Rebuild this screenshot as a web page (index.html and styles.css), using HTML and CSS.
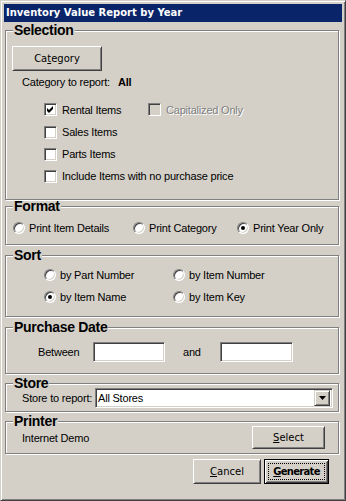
FILE: index.html
```html
<!DOCTYPE html>
<html lang="en">
<head>
  <meta charset="UTF-8" />
  <meta name="viewport" content="width=device-width, initial-scale=1.0"/>
  <title>Inventory Value Report by Year</title>
  <link rel="stylesheet" href="styles.css">
</head>
<body>

  <div class="window">
    <div class="titlebar">Inventory Value Report by Year</div>
    <div class="client">

      <fieldset class="group selection">
        <legend>Selection</legend>
        <button class="btn category-btn">Ca<u>t</u>egory</button>
        <div class="report-line"><span class="report-label">Category to report:</span><b>All</b></div>
        <div class="check-row tall">
          <label class="check-item first-col">
            <span class="check"><svg width="11" height="11" viewBox="0 0 11 11"><polygon points="2,4 4,6 8,2 8,5 4,9 2,7" fill="#000"/></svg></span>Rental Items
          </label>
          <label class="check-item disabled"><span class="check"></span>Capitalized Only</label>
        </div>
        <div class="check-row">
          <label class="check-item"><span class="check"></span>Sales Items</label>
        </div>
        <div class="check-row">
          <label class="check-item"><span class="check"></span>Parts Items</label>
        </div>
        <div class="check-row">
          <label class="check-item"><span class="check"></span>Include Items with no purchase price</label>
        </div>
      </fieldset>

      <fieldset class="group format">
        <legend>Format</legend>
        <div class="format-row">
          <label class="radio-item"><span class="radio"></span>Print Item Details</label>
          <label class="radio-item"><span class="radio"></span>Print Category</label>
          <label class="radio-item"><span class="radio"><span class="dot"></span></span>Print Year Only</label>
        </div>
      </fieldset>

      <fieldset class="group sort">
        <legend>Sort</legend>
        <div class="sort-grid">
          <label class="radio-item"><span class="radio"></span>by Part Number</label>
          <label class="radio-item"><span class="radio"></span>by Item Number</label>
          <label class="radio-item"><span class="radio"><span class="dot"></span></span>by Item Name</label>
          <label class="radio-item"><span class="radio"></span>by Item Key</label>
        </div>
      </fieldset>

      <fieldset class="group purchase">
        <legend>Purchase Date</legend>
        <div class="date-row">
          <span class="date-label">Between</span>
          <input class="field from" type="text">
          <span class="date-and">and</span>
          <input class="field to" type="text">
        </div>
      </fieldset>

      <fieldset class="group store">
        <legend>Store</legend>
        <div class="store-row">
          <span class="store-label">Store to report:</span>
          <div class="combo">
            <span class="combo-text">All Stores</span>
            <span class="combo-btn"><svg width="7" height="4" viewBox="0 0 7 4"><polygon points="0,0 7,0 3.5,4" fill="#000"/></svg></span>
          </div>
        </div>
      </fieldset>

      <fieldset class="group printer">
        <legend>Printer</legend>
        <div class="printer-row">
          <span>Internet Demo</span>
          <button class="btn select-btn"><u>S</u>elect</button>
        </div>
      </fieldset>

      <div class="actions">
        <button class="btn cancel-btn"><u>C</u>ancel</button>
        <button class="btn default-btn"><span class="focus"><u>G</u>enerate</span></button>
      </div>

    </div>
  </div>

</body>
</html>
```

FILE: styles.css
```css
* {
  box-sizing: border-box;
}

body {
  margin: 0;
  background: #d4d0c8;
  font-family: "Liberation Sans", Arial, sans-serif;
  font-size: 11px;
  letter-spacing: -0.2px;
  color: #000;
}

.window {
  width: 346px;
  height: 501px;
  padding: 3px;
  border: 1px solid;
  border-color: #d4d0c8 #404040 #404040 #d4d0c8;
  box-shadow: inset 1px 1px #fff, inset -1px -1px #808080;
  background: #d4d0c8;
  display: flex;
  flex-direction: column;
}

.titlebar {
  height: 18px;
  padding-left: 2px;
  background: #0a246a;
  color: #fff;
  font: bold 10px "DejaVu Sans", sans-serif;
  line-height: 18px;
  letter-spacing: 0;
}

.client {
  flex: 1;
  display: flex;
  flex-direction: column;
}

/* group boxes */
.group {
  margin: 0 3px 0 1px;
  padding: 0;
  min-width: 0;
  border: 1px solid #808080;
  box-shadow: inset 1px 1px #fff, 1px 1px #fff;
}

.group legend {
  margin-left: 7px;
  padding: 0 1px;
  font: bold 14px "Liberation Sans", Arial, sans-serif;
  line-height: 10px;
  letter-spacing: -0.3px;
  background: #d4d0c8;
}

.selection { margin-top: 3px; height: 175px; }
.format    { margin-top: 1px; height: 44px; }
.sort      { margin-top: 5px; height: 67px; }
.purchase  { margin-top: 5px; height: 52px; }
.store     { margin-top: 4px; height: 34px; }
.printer   { margin-top: 4px; height: 38px; }

/* classic buttons */
.btn {
  padding: 0;
  border: 1px solid;
  border-color: #fff #404040 #404040 #fff;
  box-shadow: inset 1px 1px #d4d0c8, inset -1px -1px #808080;
  background: #d4d0c8;
  color: #000;
  font: 10px "DejaVu Sans", sans-serif;
  cursor: pointer;
}

.category-btn {
  display: block;
  width: 90px;
  height: 25px;
  margin: 11px 0 0 6px;
}

.report-line {
  height: 13px;
  line-height: 13px;
  margin-top: 5px;
  padding-left: 16px;
}

.report-label {
  display: inline-block;
  width: 96px;
}

/* checkboxes */
.check-row {
  height: 22px;
  padding-left: 38px;
  display: flex;
  align-items: center;
}

.check-row.tall {
  height: 23px;
  margin-top: 9px;
}

.check-item {
  display: flex;
  align-items: center;
  gap: 5px;
}

.check-item.first-col {
  width: 104px;
}

.check {
  width: 13px;
  height: 13px;
  border: 1px solid;
  border-color: #808080 #fff #fff #808080;
  box-shadow: inset 1px 1px #404040, inset -1px -1px #d4d0c8;
  background: #fff;
  display: flex;
}

.check svg {
  display: block;
}

.disabled {
  color: #808080;
  text-shadow: 1px 1px 0 #fff;
}

.disabled .check {
  background: #d4d0c8;
}

/* radios */
.radio-item {
  display: flex;
  align-items: center;
  gap: 4px;
}

.radio {
  width: 12px;
  height: 12px;
  flex: none;
  border-radius: 50%;
  border: 1px solid;
  border-color: #808080 #fff #fff #808080;
  box-shadow: inset 1px 1px #404040, inset -1px -1px #d4d0c8;
  background: #fff;
  display: flex;
  align-items: center;
  justify-content: center;
}

.dot {
  width: 4px;
  height: 4px;
  border-radius: 50%;
  background: #000;
}

.format-row {
  margin-top: 6px;
  height: 22px;
  padding-left: 7px;
  display: grid;
  grid-template-columns: 120px 104px auto;
}

.sort-grid {
  margin-top: 4px;
  padding-left: 38px;
  display: grid;
  grid-template-columns: 129px auto;
  grid-auto-rows: 22px;
}

/* purchase date */
.date-row {
  margin-top: 10px;
  padding-left: 32px;
  display: flex;
  align-items: center;
}

.date-label {
  width: 55px;
}

.date-and {
  width: 37px;
  margin-left: 18px;
}

.field {
  height: 20px;
  margin: 0;
  padding: 0 2px;
  border: 1px solid;
  border-color: #808080 #fff #fff #808080;
  box-shadow: inset 1px 1px #404040, inset -1px -1px #d4d0c8;
  background: #fff;
  font: 11px "Liberation Sans", Arial, sans-serif;
  outline: none;
}

.field.from { width: 72px; }
.field.to   { width: 73px; }

/* store */
.store-row {
  padding-left: 16px;
  display: flex;
  align-items: center;
}

.store-label {
  width: 73px;
}

.combo {
  width: 238px;
  height: 20px;
  padding: 2px;
  border: 1px solid;
  border-color: #808080 #fff #fff #808080;
  box-shadow: inset 1px 1px #404040, inset -1px -1px #d4d0c8;
  background: #fff;
  display: flex;
  align-items: center;
}

.combo-text {
  flex: 1;
  padding-left: 0;
}

.combo-btn {
  width: 16px;
  height: 16px;
  border: 1px solid;
  border-color: #d4d0c8 #404040 #404040 #d4d0c8;
  box-shadow: inset 1px 1px #fff, inset -1px -1px #808080;
  background: #d4d0c8;
  display: flex;
  align-items: center;
  justify-content: center;
}

.combo-btn svg {
  display: block;
}

/* printer */
.printer-row {
  height: 23px;
  padding-left: 16px;
  display: flex;
  align-items: center;
}

.select-btn {
  width: 73px;
  height: 23px;
  margin: 0 13px 0 auto;
}

/* bottom buttons */
.actions {
  margin-top: 5px;
  padding-right: 13px;
  display: flex;
  justify-content: flex-end;
  gap: 3px;
}

.cancel-btn {
  width: 68px;
  height: 25px;
}

.default-btn {
  width: 65px;
  height: 25px;
  padding: 3px;
  border: 1px solid #000;
  box-shadow: inset 1px 1px #fff, inset -1px -1px #404040, inset 2px 2px #d4d0c8, inset -2px -2px #808080;
  display: flex;
  font-weight: bold;
  letter-spacing: -0.7px;
}

.default-btn .focus {
  flex: 1;
  border: 1px dotted #000;
  display: flex;
  align-items: center;
  justify-content: center;
}
```
